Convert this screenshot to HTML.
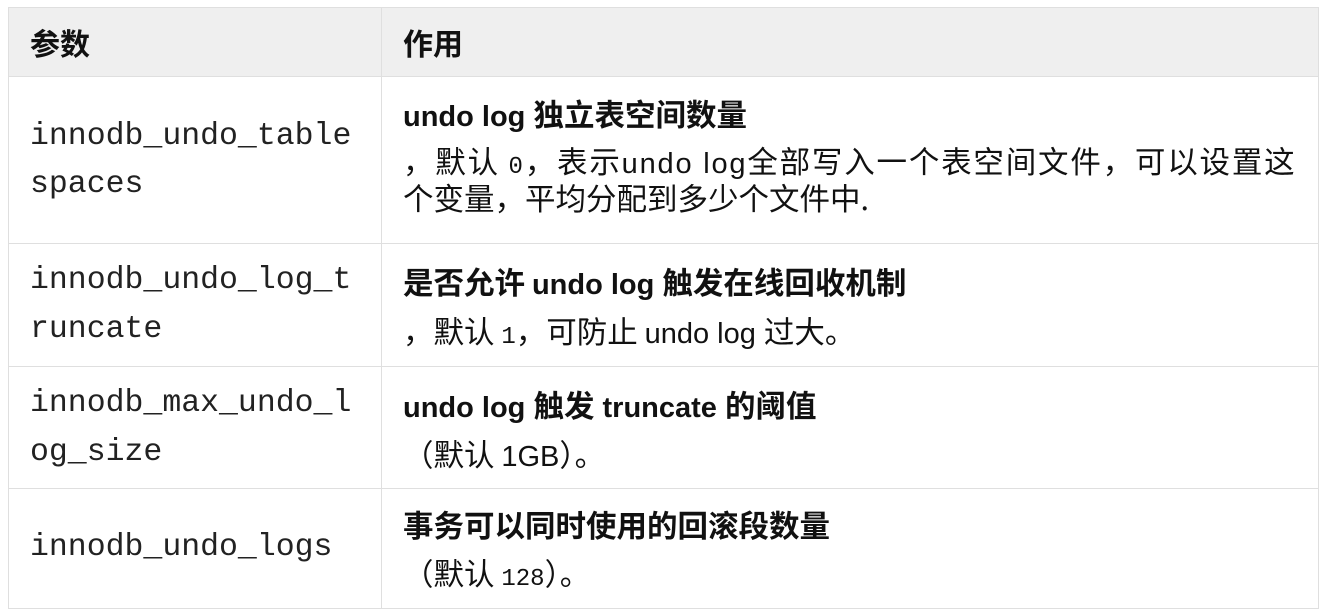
<!DOCTYPE html>
<html><head><meta charset="utf-8"><style>
body{margin:0;background:#fff;width:1326px;height:616px;overflow:hidden;position:relative;font-family:"Liberation Sans","Noto Sans CJK SC",sans-serif;color:#111}
.h{position:absolute;left:8px;top:7px;width:1311px;height:69px;background:#efefef}
.hl{position:absolute;left:8px;height:1px;width:1311px;background:#dfdfdf}
.vl{position:absolute;width:1px;background:#dfdfdf}
.t{position:absolute;white-space:nowrap;line-height:36px;font-size:29px}
.m{font-family:"Liberation Mono",monospace;font-size:31.5px;color:#222}
.s{font-family:"Liberation Mono",monospace;font-size:24px}
b{font-weight:bold}
.c{font-family:"Noto Sans CJK SC",sans-serif;font-size:30.5px}
</style></head><body>
<div class="h"></div>
<div class="hl" style="top:7px"></div>
<div class="hl" style="top:76px"></div>
<div class="hl" style="top:243px"></div>
<div class="hl" style="top:366px"></div>
<div class="hl" style="top:488px"></div>
<div class="hl" style="top:608px"></div>
<div class="vl" style="left:8px;top:7px;height:602px"></div>
<div class="vl" style="left:381px;top:7px;height:602px"></div>
<div class="vl" style="left:1318px;top:7px;height:602px"></div>

<div class="t c" style="left:30px;top:24px;font-weight:bold;font-size:30px">参数</div>
<div class="t c" style="left:403px;top:24px;font-weight:bold;font-size:30px">作用</div>

<div class="t m" style="left:30px;top:119px">innodb_undo_table</div>
<div class="t m" style="left:30px;top:167px">spaces</div>
<div class="t" style="left:403px;top:95px"><b>undo log <span class="c">独立表空间数量</span></b></div>
<div class="t" style="left:403px;top:142px;letter-spacing:1.8px"><span class="c">，默认 </span><span class="s">0</span><span class="c">，表示</span>undo log<span class="c">全部写入一个表空间文件，可以设置这</span></div>
<div class="t c" style="left:403px;top:179px">个变量，平均分配到多少个文件中.</div>

<div class="t m" style="left:30px;top:263px">innodb_undo_log_t</div>
<div class="t m" style="left:30px;top:312px">runcate</div>
<div class="t" style="left:403px;top:263px"><b><span class="c">是否允许 </span>undo log <span class="c">触发在线回收机制</span></b></div>
<div class="t" style="left:403px;top:312px"><span class="c">，默认 </span><span class="s">1</span><span class="c">，可防止 </span>undo log <span class="c">过大。</span></div>

<div class="t m" style="left:30px;top:386px">innodb_max_undo_l</div>
<div class="t m" style="left:30px;top:435px">og_size</div>
<div class="t" style="left:403px;top:386px"><b>undo log <span class="c">触发</span> truncate <span class="c">的阈值</span></b></div>
<div class="t" style="left:403px;top:435px"><span class="c">（默认 </span>1GB<span class="c">）。</span></div>

<div class="t m" style="left:30px;top:530px">innodb_undo_logs</div>
<div class="t c" style="left:403px;top:506px;font-weight:bold">事务可以同时使用的回滚段数量</div>
<div class="t" style="left:403px;top:554px"><span class="c">（默认 </span><span class="s">128</span><span class="c">）。</span></div>
</body></html>
